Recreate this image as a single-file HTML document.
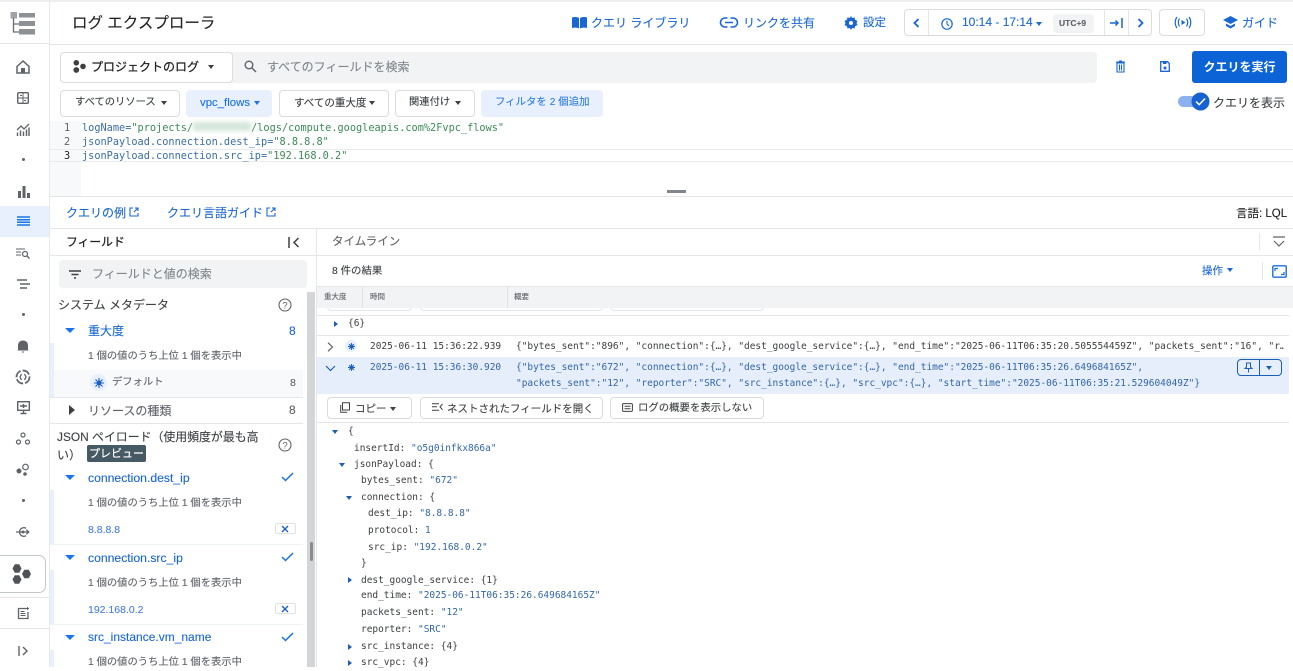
<!DOCTYPE html>
<html lang="ja"><head><meta charset="utf-8"><title>ログ エクスプローラ</title>
<style>
html,body{margin:0;padding:0;background:#fff}
body{width:1293px;height:667px;overflow:hidden;position:relative;font-family:"Liberation Sans","Noto Sans CJK JP",sans-serif;color:#3c4043}
#r{position:absolute;inset:0;filter:blur(.3px)}
#r>*{position:absolute}
.t{white-space:nowrap;line-height:16px;height:16px;font-size:12px;-webkit-text-stroke:.12px currentColor}
.m{font-family:"DejaVu Sans Mono","Liberation Mono","Noto Sans CJK JP",monospace;white-space:pre;line-height:14px;height:14px;font-size:9.47px;color:#3c4043}
.q{font-size:10.25px;color:#3a6ea5}
.b{color:#1a73e8}
.v{color:#3367a8}
.g{color:#3b8a57}
.box{box-sizing:border-box;border:1px solid #dadce0;border-radius:4px;background:#fff}
.hl{background:#f1f3f4}
.line{background:#e4e6e8}
.btn{box-sizing:border-box;border:1px solid #dadce0;border-radius:4px;background:#fff;height:27px}
.act{background:#e8f0fe;border-color:#e8f0fe}
svg{display:block;overflow:visible}
.ar{width:0;height:0;border-left:3.5px solid transparent;border-right:3.5px solid transparent;border-top:4px solid currentColor}
.ard{width:0;height:0;border-left:5.5px solid transparent;border-right:5.5px solid transparent;border-top:5.5px solid #1a73e8}
.arr{width:0;height:0;border-top:3.5px solid transparent;border-bottom:3.5px solid transparent;border-left:4px solid #1a5fb4}
.ard2{width:0;height:0;border-left:3.5px solid transparent;border-right:3.5px solid transparent;border-top:4px solid #1a5fb4}
</style></head><body><div id="r">

<!-- global frame -->
<div class="line" style="left:0;top:0;width:1293px;height:2px;background:#eceef0"></div>
<div class="line" style="left:49px;top:2px;width:1px;height:665px;background:#e6e8ea"></div>
<div class="line" style="left:0;top:43px;width:50px;height:1px"></div>
<div class="line" style="left:50px;top:44px;width:1243px;height:1px"></div>

<!-- logo -->
<svg style="left:10px;top:11px" width="26" height="24" viewBox="0 0 26 24"><rect x="0.5" y="1" width="6.5" height="6.5" fill="#a0a4a8"/><rect x="9" y="2" width="16" height="4.5" fill="#8d9195"/><rect x="9" y="10" width="16" height="5" fill="#8d9195"/><rect x="9" y="18" width="16" height="5.5" fill="#8d9195"/><path d="M3.500 7V21H9M3.500 13H9" stroke="#6b6f73" fill="none" stroke-width="1.300"/></svg>

<!-- rail icons -->
<svg style="left:15px;top:59px" width="16" height="16" viewBox="0 0 16 16"><path d="M2 7.500 8 2l6 5.500V14H2z" fill="none" stroke="#5f6368" stroke-width="1.500"/><rect x="6" y="9" width="4" height="5" fill="#5f6368"/></svg>
<svg style="left:17px;top:92px" width="12" height="12" viewBox="0 0 12 12"><rect x=".7" y=".7" width="10.600" height="10.600" rx="1" fill="none" stroke="#5f6368" stroke-width="1.400"/><path d="M6 1V11M1 6H11M3 3.500H5M7 8.500H9" stroke="#5f6368" stroke-width="1"/></svg>
<svg style="left:16px;top:123px" width="14" height="13" viewBox="0 0 14 13"><path d="M1 7 5 3l3 3 5-5" fill="none" stroke="#5f6368" stroke-width="1.300"/><path d="M1.500 9.500V13M4.500 7.500V13M7.500 8.500V13M10.500 6.500V13M13 4.500V13" stroke="#5f6368" stroke-width="1.400"/></svg>
<div style="left:21.500px;top:158px;width:3px;height:3px;border-radius:50%;background:#5f6368"></div>
<svg style="left:17px;top:185px" width="13" height="13" viewBox="0 0 13 13"><rect x="1" y="6" width="3" height="7" fill="#5f6368"/><rect x="5.500" y="1" width="3" height="12" fill="#5f6368"/><rect x="10" y="8" width="3" height="5" fill="#5f6368"/></svg>
<div style="left:0;top:206px;width:49px;height:31px;background:#e8f0fe"></div>
<svg style="left:17px;top:216px" width="13" height="10" viewBox="0 0 13 10"><path d="M0 1h13M0 3.700h13M0 6.300h13M0 9h13" stroke="#1a73e8" stroke-width="1.500"/></svg>
<svg style="left:16px;top:248px" width="14" height="11" viewBox="0 0 14 11"><path d="M0 1h9M0 4h5M0 7h5" stroke="#5f6368" stroke-width="1.100"/><circle cx="9" cy="6" r="2.500" fill="none" stroke="#5f6368" stroke-width="1.200"/><path d="m11 8 2.500 2.500" stroke="#5f6368" stroke-width="1.300"/></svg>
<svg style="left:17px;top:279px" width="13" height="10" viewBox="0 0 13 10"><path d="M0 1h10M3 5h10M3 9h7" stroke="#5f6368" stroke-width="1.400"/></svg>
<div style="left:21.500px;top:313px;width:3px;height:3px;border-radius:50%;background:#5f6368"></div>
<svg style="left:17px;top:339px" width="12" height="14" viewBox="0 0 12 14"><path d="M1 11V6.500C1 3.500 3 1.500 6 1.500s5 2 5 5V11l1 .5H0zM4.500 12.500h3L6 14z" fill="#5f6368"/></svg>
<svg style="left:15px;top:369px" width="16" height="16" viewBox="0 0 16 16"><circle cx="8" cy="8" r="6.500" fill="none" stroke="#5f6368" stroke-width="1.800" stroke-dasharray="8 2"/><path d="M6.500 5 5 8l1.500 3M9.500 5 11 8l-1.500 3" stroke="#5f6368" fill="none" stroke-width="1.300"/></svg>
<svg style="left:17px;top:401px" width="13" height="13" viewBox="0 0 13 13"><rect x=".7" y=".7" width="11.600" height="8.600" fill="none" stroke="#5f6368" stroke-width="1.400"/><path d="M3 5h7M6.500 3v4M3.500 12.500h6M6.500 10v2" stroke="#5f6368" stroke-width="1.500"/></svg>
<svg style="left:16px;top:432px" width="14" height="13" viewBox="0 0 14 13"><g fill="none" stroke="#5f6368" stroke-width="1.200"><circle cx="7" cy="3" r="2"/><circle cx="2.500" cy="10" r="2"/><circle cx="11.500" cy="10" r="2"/></g></svg>
<svg style="left:16px;top:463px" width="14" height="13" viewBox="0 0 14 13"><circle cx="3" cy="8" r="2.500" fill="#5f6368"/><circle cx="9.500" cy="4" r="2.800" fill="none" stroke="#5f6368" stroke-width="1.200"/><circle cx="9" cy="11" r="1.800" fill="#5f6368"/></svg>
<div style="left:21.500px;top:499px;width:3px;height:3px;border-radius:50%;background:#5f6368"></div>
<svg style="left:16px;top:526px" width="14" height="12" viewBox="0 0 14 12"><path d="M10 2.300A4.300 4.300 0 1 0 10 9.700" fill="none" stroke="#5f6368" stroke-width="1.300"/><path d="M0 6h12.500M10.300 3.800 12.800 6l-2.500 2.200" stroke="#5f6368" fill="none" stroke-width="1.300"/><circle cx="7" cy="6" r="1.500" fill="#5f6368"/></svg>
<div style="left:0;top:555px;width:46px;height:38px;box-sizing:border-box;border:1px solid #c4c7ca;border-left:0;border-radius:0 7px 7px 0;background:#fff"></div>
<svg style="left:11px;top:562px" width="22" height="23" viewBox="0 0 22 23"><g fill="#4f5357"><polygon points="1.500,6.500 3.800,2.300 8.200,2.300 10.500,6.500 8.200,10.700 3.800,10.700"/><polygon points="11,12 13.300,7.800 17.700,7.800 20,12 17.700,16.200 13.300,16.200"/><polygon points="1.500,17.500 3.800,13.300 8.200,13.300 10.500,17.500 8.200,21.700 3.800,21.700"/></g></svg>
<div class="line" style="left:0;top:597px;width:49px;height:1px"></div>
<svg style="left:17px;top:607px" width="13" height="13" viewBox="0 0 13 13"><path d="M9 1.500H1.500v10h9.500V5" fill="none" stroke="#5f6368" stroke-width="1.300"/><path d="M3.500 4.500h4M3.500 6.500h5M3.500 8.500h5" stroke="#5f6368"/><path d="M10.500 0v3M9 1.500h3" stroke="#5f6368"/></svg>
<div class="line" style="left:0;top:628px;width:49px;height:1px"></div>
<svg style="left:18px;top:646px" width="11" height="10" viewBox="0 0 11 10"><path d="M1 0v10M5 1l4 4-4 4" fill="none" stroke="#5f6368" stroke-width="1.400"/></svg>

<!-- header -->
<div class="t" style="left:72px;top:13px;font-size:15.500px;line-height:22px;height:22px;color:#202124">ログ エクスプローラ</div>
<svg style="left:572px;top:16px" width="15" height="13" viewBox="0 0 15 13"><path d="M0 1.500C2 .8 5 .8 7 2v10.500C5 11.500 2 11.500 0 12zM15 1.500C13 .8 10 .8 8 2v10.500c2-1 5-1 7-.5z" fill="#1967d2"/></svg>
<div class="t b" style="left:591px;top:15px;font-size:12px;color:#1967d2">クエリ ライブラリ</div>
<svg style="left:720px;top:17px" width="18" height="11" viewBox="0 0 18 11"><path d="M7.500 1H5a4.300 4.300 0 0 0 0 9h2.500M10.500 1H13a4.300 4.300 0 0 1 0 9h-2.500M5 5.500h8" fill="none" stroke="#1967d2" stroke-width="1.600"/></svg>
<div class="t b" style="left:743px;top:15px;font-size:12px;color:#1967d2">リンクを共有</div>
<svg style="left:844px;top:16px" width="14" height="14" viewBox="0 0 14 14"><path d="M7 0l1.200 2 2.300-.6.600 2.300L13.500 5 12.500 7l1 2-2.400 1.200-.6 2.300-2.300-.5L7 14l-1.200-2-2.300.5-.6-2.300L.5 9 1.500 7l-1-2 2.400-1.300.6-2.300 2.300.6z" fill="#1967d2"/><circle cx="7" cy="7" r="2" fill="#fff"/></svg>
<div class="t b" style="left:863px;top:15px;font-size:11.500px;color:#1967d2">設定</div>
<div class="box" style="left:904px;top:9px;width:248px;height:27px"></div>
<div class="line" style="left:928px;top:10px;width:1px;height:25px"></div>
<div class="line" style="left:1104px;top:10px;width:1px;height:25px"></div>
<div class="line" style="left:1128px;top:10px;width:1px;height:25px"></div>
<svg style="left:913px;top:18px" width="7" height="10" viewBox="0 0 7 10"><path d="M5.500 1 1.500 5l4 4" fill="none" stroke="#1967d2" stroke-width="1.800"/></svg>
<svg style="left:941px;top:18px" width="12" height="12" viewBox="0 0 12 12"><circle cx="6" cy="6" r="5.200" fill="none" stroke="#1967d2" stroke-width="1.200"/><path d="M6 2.800V6l2 2" fill="none" stroke="#1967d2" stroke-width="1.100"/></svg>
<div class="t b" style="left:962px;top:14px;font-size:12px;color:#1967d2">10:14 - 17:14</div>
<div class="ar" style="left:1036px;top:22px;color:#1967d2"></div>
<div class="hl" style="left:1053px;top:14px;width:41px;height:19px;border-radius:4px"></div>
<div class="t" style="left:1059px;top:14.500px;font-size:8.500px;font-weight:bold;color:#5f6368">UTC+9</div>
<svg style="left:1110px;top:18px" width="13" height="10" viewBox="0 0 13 10"><path d="M0 5h8M5.500 2.500 8 5 5.500 7.500M12 0v10" fill="none" stroke="#1967d2" stroke-width="1.500"/></svg>
<svg style="left:1137px;top:18px" width="7" height="10" viewBox="0 0 7 10"><path d="M1.500 1l4 4-4 4" fill="none" stroke="#1967d2" stroke-width="1.800"/></svg>
<div class="box" style="left:1159px;top:9px;width:46px;height:27px"></div>
<svg style="left:1174px;top:16px" width="18" height="13" viewBox="0 0 18 13"><path d="M3 1C.7 4 .7 9 3 12M15 1c2.300 3 2.300 8 0 11M5.500 2.500c-1.500 2.500-1.500 5.500 0 8M12.500 2.500c1.500 2.500 1.500 5.500 0 8" fill="none" stroke="#1967d2" stroke-width="1.200"/><path d="M7.500 4v5l4-2.500z" fill="#1967d2"/></svg>
<svg style="left:1223px;top:16px" width="15" height="13" viewBox="0 0 15 13"><path d="M7.500 0 15 4 7.500 8 0 4z" fill="#1967d2"/><path d="M3 7.500V10l4.500 2.500L12 10V7.500L7.500 10z" fill="#1967d2"/></svg>
<div class="t" style="left:1242px;top:15px;font-size:12px;color:#1967d2">ガイド</div>

<!-- search row -->
<div class="hl" style="left:60px;top:52px;width:1037px;height:31px;border-radius:4px"></div>
<div class="box" style="left:60px;top:52px;width:173px;height:31px"></div>
<svg style="left:73px;top:60px" width="13" height="13" viewBox="0 0 13 13"><circle cx="3.300" cy="2.800" r="2.800" fill="#3c4043"/><circle cx="3.300" cy="10" r="2.900" fill="#3c4043"/><circle cx="10" cy="6.400" r="2.800" fill="#3c4043"/></svg>
<div class="t" style="left:91px;top:59px;font-size:12px;color:#202124;-webkit-text-stroke:.25px #202124">プロジェクトのログ</div>
<div class="ar" style="left:208px;top:65px"></div>
<svg style="left:244px;top:60px" width="13" height="13" viewBox="0 0 13 13"><circle cx="5" cy="5" r="3.800" fill="none" stroke="#5f6368" stroke-width="1.400"/><path d="m8 8 4 4" stroke="#5f6368" stroke-width="1.500"/></svg>
<div class="t" style="left:267px;top:59px;color:#80868b;font-size:12px">すべてのフィールドを検索</div>
<svg style="left:1116px;top:61px" width="9" height="11" viewBox="0 0 9 11"><path d="M0 1h9M3 0h3M1 2h7v9H1zM3.500 3.500v6M5.500 3.500v6" fill="none" stroke="#1967d2" stroke-width="1.100"/></svg>
<svg style="left:1160px;top:61px" width="10" height="11" viewBox="0 0 10 11"><path d="M.7.700h6.800l1.800 1.800v7.800H.7z" fill="none" stroke="#1967d2" stroke-width="1.300"/><rect x="3" y="1" width="3.500" height="2" fill="#1967d2"/><circle cx="5" cy="7" r="1.500" fill="#1967d2"/></svg>
<div style="left:1192px;top:51px;width:95px;height:32px;background:#0b63d6;border-radius:3px;color:#fff;font-size:12px;font-weight:bold;text-align:center;line-height:32px">クエリを実行</div>

<!-- filter row -->
<div class="btn" style="left:60px;top:90px;width:120px"></div>
<div class="t" style="left:75px;top:95px;font-size:10.300px">すべてのリソース</div><div class="ar" style="left:161px;top:101px"></div>
<div class="btn act" style="left:186px;top:90px;width:86px"></div>
<div class="t" style="left:200px;top:95px;font-size:11.400px;color:#1a73e8">vpc_flows</div><div class="ar" style="left:254px;top:101px;color:#1a73e8"></div>
<div class="btn" style="left:279px;top:90px;width:110px"></div>
<div class="t" style="left:294px;top:95px;font-size:10.500px">すべての重大度</div><div class="ar" style="left:369px;top:101px"></div>
<div class="btn" style="left:395px;top:90px;width:80px"></div>
<div class="t" style="left:409px;top:95px;font-size:10.300px">関連付け</div><div class="ar" style="left:455px;top:101px"></div>
<div class="btn act" style="left:481px;top:90px;width:122px"></div>
<div class="t" style="left:495px;top:95px;font-size:10.400px;color:#2f7de0">フィルタを 2 個追加</div>
<div style="left:1178px;top:96px;width:22px;height:11px;border-radius:6px;background:#8ab0ee"></div>
<svg style="left:1191px;top:92px" width="19" height="19" viewBox="0 0 19 19"><circle cx="9.500" cy="9.500" r="9" fill="#1662d0"/><path d="m5 9.500 3.200 3.200L14 6.500" fill="none" stroke="#fff" stroke-width="1.500"/></svg>
<div class="t" style="left:1213px;top:95px;color:#3c4043">クエリを表示</div>

<!-- query editor -->
<div style="left:50px;top:121px;width:31px;height:75px;background:#f8f9fa"></div>
<div style="left:50px;top:149px;width:1243px;height:13px;box-sizing:border-box;border-top:1px solid #e8eaed;border-bottom:1px solid #e8eaed"></div>
<div class="m" style="left:64px;top:121px;font-size:10.250px;color:#5f6368">1</div>
<div class="m" style="left:64px;top:135px;font-size:10.250px;color:#5f6368">2</div>
<div class="m" style="left:64px;top:149px;font-size:10.250px;color:#202124">3</div>
<div class="m q" style="left:82px;top:121px">logName=<span class="g">"projects/</span><span style="display:inline-block;width:58px;height:9px;background:#d5e6dc;filter:blur(2px)"></span><span class="g">/logs/compute.googleapis.com%2Fvpc_flows"</span></div>
<div class="m q" style="left:82px;top:135px">jsonPayload.connection.dest_ip=<span class="g">"8.8.8.8"</span></div>
<div class="m q" style="left:82px;top:149px">jsonPayload.connection.src_ip=<span class="g">"192.168.0.2"</span></div>
<div style="left:667px;top:190px;width:19px;height:3px;background:#80868b"></div>
<div class="line" style="left:50px;top:196px;width:1243px;height:1px"></div>

<!-- links row -->
<div class="t b" style="left:66px;top:205px;color:#1967d2">クエリの例</div>
<svg style="left:129px;top:207px" width="10" height="10" viewBox="0 0 10 10"><path d="M4 1H1v8h8V6M5 5l4-4M6 1h3v3" fill="none" stroke="#1967d2" stroke-width="1.100"/></svg>
<div class="t b" style="left:167px;top:205px;color:#1967d2">クエリ言語ガイド</div>
<svg style="left:266px;top:207px" width="10" height="10" viewBox="0 0 10 10"><path d="M4 1H1v8h8V6M5 5l4-4M6 1h3v3" fill="none" stroke="#1967d2" stroke-width="1.100"/></svg>
<div class="t" style="left:1236px;top:206px;color:#202124;font-size:11.500px">言語: LQL</div>
<div class="line" style="left:50px;top:228px;width:1243px;height:1px"></div>

<!-- fields panel -->
<div class="line" style="left:316px;top:228px;width:1px;height:439px"></div>
<div class="t" style="left:66px;top:234px;color:#202124;font-size:11.800px;-webkit-text-stroke:.25px #202124">フィールド</div>
<svg style="left:288px;top:237px" width="12" height="11" viewBox="0 0 12 11"><path d="M1 0v11M10.500 1 6 5.500l4.500 4.500" fill="none" stroke="#3c4043" stroke-width="1.500"/></svg>
<div class="line" style="left:50px;top:255px;width:266px;height:1px"></div>
<div class="hl" style="left:59px;top:260px;width:248px;height:28px;border-radius:4px"></div>
<svg style="left:69px;top:270px" width="12" height="9" viewBox="0 0 12 9"><path d="M0 1h12M2.500 4.500h7M5 8h2" stroke="#3c4043" stroke-width="1.400"/></svg>
<div class="t" style="left:92px;top:266px;color:#80868b;font-size:12px">フィールドと値の検索</div>
<div style="left:307px;top:292px;width:8px;height:375px;background:#d3d5d6"></div>
<div style="left:309.500px;top:542px;width:3px;height:19px;background:#8a8d90;border-radius:2px"></div>

<div class="t" style="left:58px;top:297px;font-size:12px;color:#3c4043">システム メタデータ</div>
<svg style="left:278px;top:298px" width="14" height="14" viewBox="0 0 14 14"><circle cx="7" cy="7" r="6" fill="none" stroke="#5f6368" stroke-width="1.100"/><text x="7" y="10.300" font-size="9.500" text-anchor="middle" fill="#5f6368" font-family="Liberation Sans">?</text></svg>
<div class="ard" style="left:65px;top:328px"></div>
<div class="t b" style="left:88px;top:323px;font-size:12px;color:#1967d2">重大度</div>
<div class="t b" style="left:289px;top:323px;font-size:12px;color:#1967d2">8</div>
<div style="left:50px;top:343px;width:4px;height:54px;background:#e8f0fe"></div>
<div class="t" style="left:88px;top:349px;font-size:10.300px;color:#5f6368">1 個の値のうち上位 1 個を表示中</div>
<div style="left:54px;top:370px;width:249px;height:27px;background:#f8f9fa"></div>
<div style="left:90px;top:374px;width:17px;height:17px;border-radius:50%;background:#e8f0fe"></div>
<svg style="left:93.500px;top:377.500px" width="10" height="10" viewBox="0 0 10 10"><g stroke="#1a5fc4" stroke-width="1.100"><path d="M5 0v10M0 5h10M1.500 1.500l7 7M8.500 1.500l-7 7"/></g><circle cx="5" cy="5" r="2.400" fill="#1a5fc4"/></svg>
<div class="t" style="left:112px;top:375px;font-size:10.300px;color:#5f6368">デフォルト</div>
<div class="t" style="left:290px;top:375px;font-size:10.500px;color:#5f6368">8</div>
<div class="line" style="left:50px;top:397px;width:253px;height:1px"></div>
<div style="left:69px;top:405px;width:0;height:0;border-top:5px solid transparent;border-bottom:5px solid transparent;border-left:6px solid #3c4043"></div>
<div class="t" style="left:88px;top:403px;font-size:12px;color:#5f6368">リソースの種類</div>
<div class="t" style="left:289px;top:402px;font-size:12px;color:#5f6368">8</div>
<div class="line" style="left:50px;top:423px;width:253px;height:1px"></div>
<div class="t" style="left:57px;top:429px;font-size:11.900px;color:#3c4043">JSON ペイロード（使用頻度が最も高</div>
<div class="t" style="left:57px;top:447px;font-size:12px;color:#3c4043">い）</div>
<div style="left:87px;top:445px;width:59px;height:17px;background:#455a64;border-radius:2px;color:#fff;font-size:11px;text-align:center;line-height:18px;-webkit-text-stroke:.2px #fff">プレビュー</div>
<svg style="left:278px;top:438px" width="14" height="14" viewBox="0 0 14 14"><circle cx="7" cy="7" r="6" fill="none" stroke="#5f6368" stroke-width="1.100"/><text x="7" y="10.300" font-size="9.500" text-anchor="middle" fill="#5f6368" font-family="Liberation Sans">?</text></svg>

<div class="ard" style="left:65px;top:475px"></div>
<div class="t b" style="left:88px;top:470px;font-size:12.200px;color:#1967d2">connection.dest_ip</div>
<svg style="left:281px;top:472px" width="13" height="10" viewBox="0 0 13 10"><path d="m1 5 3.500 3.500L12 1" fill="none" stroke="#1a6fd8" stroke-width="1.500"/></svg>
<div style="left:50px;top:490px;width:4px;height:54px;background:#e8f0fe"></div>
<div class="t" style="left:88px;top:496px;font-size:10.300px;color:#5f6368">1 個の値のうち上位 1 個を表示中</div>
<div class="t" style="left:88px;top:522px;font-size:10.500px;color:#4a80d8">8.8.8.8</div>
<div class="box" style="left:275px;top:523px;width:21px;height:11px;border-radius:2px;border-color:#e0e2e4"></div>
<svg style="left:281px;top:525px" width="8" height="8" viewBox="0 0 8 8"><path d="m1 1 6 6M7 1 1 7" stroke="#1a5fc4" stroke-width="1.400"/></svg>
<div class="line" style="left:50px;top:544px;width:253px;height:1px;background:#eef1f6"></div>

<div class="ard" style="left:65px;top:555px"></div>
<div class="t b" style="left:88px;top:550px;font-size:12.200px;color:#1967d2">connection.src_ip</div>
<svg style="left:281px;top:552px" width="13" height="10" viewBox="0 0 13 10"><path d="m1 5 3.500 3.500L12 1" fill="none" stroke="#1a6fd8" stroke-width="1.500"/></svg>
<div style="left:50px;top:570px;width:4px;height:54px;background:#e8f0fe"></div>
<div class="t" style="left:88px;top:576px;font-size:10.300px;color:#5f6368">1 個の値のうち上位 1 個を表示中</div>
<div class="t" style="left:88px;top:602px;font-size:10.500px;color:#4a80d8">192.168.0.2</div>
<div class="box" style="left:275px;top:603px;width:21px;height:11px;border-radius:2px;border-color:#e0e2e4"></div>
<svg style="left:281px;top:605px" width="8" height="8" viewBox="0 0 8 8"><path d="m1 1 6 6M7 1 1 7" stroke="#1a5fc4" stroke-width="1.400"/></svg>
<div class="line" style="left:50px;top:624px;width:253px;height:1px;background:#eef1f6"></div>

<div class="ard" style="left:65px;top:635px"></div>
<div class="t b" style="left:88px;top:629px;font-size:12px;color:#1967d2">src_instance.vm_name</div>
<svg style="left:281px;top:632px" width="13" height="10" viewBox="0 0 13 10"><path d="m1 5 3.500 3.500L12 1" fill="none" stroke="#1a6fd8" stroke-width="1.500"/></svg>
<div style="left:50px;top:650px;width:4px;height:17px;background:#e8f0fe"></div>
<div class="t" style="left:88px;top:655px;font-size:10.300px;color:#5f6368">1 個の値のうち上位 1 個を表示中</div>

<!-- right panel -->
<div class="t" style="left:332px;top:234px;font-size:11.500px;color:#5f6368">タイムライン</div>
<div class="line" style="left:1259px;top:233px;width:1px;height:17px"></div>
<svg style="left:1273px;top:236px" width="12" height="11" viewBox="0 0 12 11"><path d="M0 1h12M1 5l5 5 5-5" fill="none" stroke="#5f6368" stroke-width="1.200"/></svg>
<div class="line" style="left:317px;top:255px;width:976px;height:1px"></div>
<div class="t" style="left:332px;top:264px;font-size:10.400px;color:#3c4043">8 件の結果</div>
<div class="t b" style="left:1202px;top:263px;font-size:10.500px;color:#1967d2">操作</div>
<div class="ar" style="left:1227px;top:268px;color:#1967d2"></div>
<div class="line" style="left:1262px;top:262px;width:1px;height:18px"></div>
<svg style="left:1272px;top:265px" width="15" height="13" viewBox="0 0 15 13"><rect x=".8" y=".8" width="13.400" height="11.400" rx="1" fill="none" stroke="#1a6fd8" stroke-width="1.400"/><path d="M3 6V3.500h3M12 7v2.500H9" fill="none" stroke="#1a6fd8" stroke-width="1.300"/></svg>

<div style="left:317px;top:286px;width:976px;height:22px;background:#f1f3f4"></div>
<div class="line" style="left:317px;top:286px;width:976px;height:1px"></div>
<div class="line" style="left:362px;top:287px;width:1px;height:21px;background:#dfe1e3"></div>
<div class="line" style="left:507px;top:287px;width:1px;height:21px;background:#dfe1e3"></div>
<div class="t" style="left:324px;top:289px;font-size:7.500px;color:#5f6368">重大度</div>
<div class="t" style="left:370px;top:289px;font-size:7.500px;color:#5f6368">時間</div>
<div class="t" style="left:514px;top:289px;font-size:7.500px;color:#5f6368">概要</div>

<div style="left:327px;top:300px;width:85px;height:11px;box-sizing:border-box;border:1px solid #e4e6e8;border-top:0;border-radius:0 0 4px 4px;clip-path:inset(8px 0 0 0)"></div>
<div style="left:420px;top:300px;width:183px;height:11px;box-sizing:border-box;border:1px solid #e4e6e8;border-top:0;border-radius:0 0 4px 4px;clip-path:inset(8px 0 0 0)"></div>
<div style="left:610px;top:300px;width:154px;height:11px;box-sizing:border-box;border:1px solid #e4e6e8;border-top:0;border-radius:0 0 4px 4px;clip-path:inset(8px 0 0 0)"></div>
<div class="line" style="left:317px;top:315px;width:972px;height:1px"></div>
<div class="arr" style="left:334px;top:320.500px"></div>
<div class="m" style="left:348px;top:317px">{6}</div>
<div class="line" style="left:317px;top:335px;width:972px;height:1px"></div>

<svg style="left:327px;top:342px" width="7" height="10" viewBox="0 0 7 10"><path d="m1 .7 4.500 4.300L1 9.300" fill="none" stroke="#5f6368" stroke-width="1.200"/></svg>
<div style="left:345px;top:340px;width:12px;height:12px;border-radius:50%;background:#e8f0fe"></div>
<svg style="left:347.500px;top:342.500px" width="7" height="7" viewBox="0 0 10 10"><g stroke="#1a5fc4" stroke-width="1.300"><path d="M5 0v10M0 5h10M1.500 1.500l7 7M8.500 1.500l-7 7"/></g><circle cx="5" cy="5" r="2.800" fill="#1a5fc4"/></svg>
<div class="m" style="left:370px;top:340px">2025-06-11 15:36:22.939</div>
<div class="m" style="left:516px;top:340px;width:768px;overflow:hidden">{"bytes_sent":"896", "connection":{…}, "dest_google_service":{…}, "end_time":"2025-06-11T06:35:20.505554459Z", "packets_sent":"16", "r…</div>

<div style="left:317px;top:357px;width:972px;height:37px;background:#e6eefb"></div>
<svg style="left:325px;top:365px" width="11" height="7" viewBox="0 0 11 7"><path d="m1 1 4.500 4.500L10 1" fill="none" stroke="#1a5fb4" stroke-width="1.200"/></svg>
<svg style="left:347.500px;top:363.500px" width="7" height="7" viewBox="0 0 10 10"><g stroke="#1a5fc4" stroke-width="1.300"><path d="M5 0v10M0 5h10M1.500 1.500l7 7M8.500 1.500l-7 7"/></g><circle cx="5" cy="5" r="2.800" fill="#1a5fc4"/></svg>
<div class="m v" style="left:370px;top:361px">2025-06-11 15:36:30.920</div>
<div class="m v" style="left:516px;top:361px">{"bytes_sent":"672", "connection":{…}, "dest_google_service":{…}, "end_time":"2025-06-11T06:35:26.649684165Z",</div>
<div class="m v" style="left:516px;top:377px">"packets_sent":"12", "reporter":"SRC", "src_instance":{…}, "src_vpc":{…}, "start_time":"2025-06-11T06:35:21.529604049Z"}</div>
<div style="left:1237px;top:359px;width:45px;height:17px;box-sizing:border-box;border:1px solid #1a5fb4;border-radius:4px"></div>
<div style="left:1259px;top:360px;width:1px;height:15px;background:#1a5fb4"></div>
<svg style="left:1244px;top:362px" width="9" height="11" viewBox="0 0 9 11"><path d="M2.500 1h4v4l1.500 1.500H1L2.500 5zM4.500 6.500V10.500" fill="none" stroke="#1a5fb4" stroke-width="1"/></svg>
<div class="ar" style="left:1266px;top:365.500px;color:#1a5fb4"></div>

<div class="btn" style="left:327px;top:397px;width:85px;height:22px"></div>
<svg style="left:340px;top:402px" width="10" height="11" viewBox="0 0 10 11"><path d="M2.500 8V.7h7V8zM.7 3v7.300h6.500" fill="none" stroke="#3c4043" stroke-width="1"/></svg>
<div class="t" style="left:355px;top:401px;font-size:10.500px;color:#3c4043">コピー</div>
<div class="ar" style="left:390px;top:406.500px"></div>
<div class="btn" style="left:420px;top:397px;width:183px;height:22px"></div>
<svg style="left:432px;top:403px" width="11" height="8" viewBox="0 0 11 8"><path d="M0 .7h7M0 3.800h5M0 7.200h7M10.500 1 8 3.800l2.500 3" fill="none" stroke="#3c4043" stroke-width="1"/></svg>
<div class="t" style="left:447px;top:401px;font-size:10.500px;color:#3c4043">ネストされたフィールドを開く</div>
<div class="btn" style="left:610px;top:397px;width:154px;height:22px"></div>
<svg style="left:622px;top:403px" width="11" height="9" viewBox="0 0 11 9"><rect x=".6" y=".6" width="9.800" height="7.800" rx="1" fill="none" stroke="#3c4043"/><path d="M2.500 3.300h6M2.500 5.700h6" stroke="#3c4043"/></svg>
<div class="t" style="left:638px;top:401px;font-size:10.400px;color:#3c4043">ログの概要を表示しない</div>
<div class="line" style="left:317px;top:422px;width:972px;height:1px"></div>

<div class="ard2" style="left:332px;top:430px"></div>
<div class="m" style="left:348px;top:425px">{</div>
<div class="m" style="left:354px;top:442px">insertId: <span class="v">"o5g0infkx866a"</span></div>
<div class="ard2" style="left:339px;top:463px"></div>
<div class="m" style="left:354px;top:458px">jsonPayload: {</div>
<div class="m" style="left:361px;top:474px">bytes_sent: <span class="v">"672"</span></div>
<div class="ard2" style="left:346px;top:496px"></div>
<div class="m" style="left:361px;top:491px">connection: {</div>
<div class="m" style="left:368px;top:507px">dest_ip: <span class="v">"8.8.8.8"</span></div>
<div class="m" style="left:368px;top:524px">protocol: <span class="v">1</span></div>
<div class="m" style="left:368px;top:541px">src_ip: <span class="v">"192.168.0.2"</span></div>
<div class="m" style="left:361px;top:557px">}</div>
<div class="arr" style="left:348px;top:577px"></div>
<div class="m" style="left:361px;top:574px">dest_google_service: {1}</div>
<div class="m" style="left:361px;top:589px">end_time: <span class="v">"2025-06-11T06:35:26.649684165Z"</span></div>
<div class="m" style="left:361px;top:606px">packets_sent: <span class="v">"12"</span></div>
<div class="m" style="left:361px;top:623px">reporter: <span class="v">"SRC"</span></div>
<div class="arr" style="left:348px;top:644px"></div>
<div class="m" style="left:361px;top:640px">src_instance: {4}</div>
<div class="arr" style="left:348px;top:660px"></div>
<div class="m" style="left:361px;top:656px">src_vpc: {4}</div>

</div></body></html>
